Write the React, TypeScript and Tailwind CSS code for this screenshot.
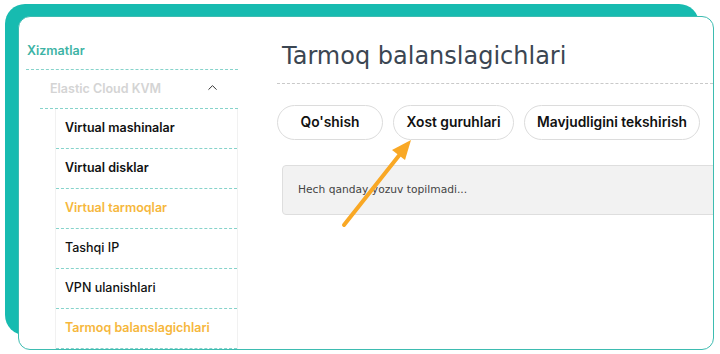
import { ChevronUp } from "lucide-react";

const SUB_ITEMS = [
  { label: "Virtual mashinalar", active: false },
  { label: "Virtual disklar", active: false },
  { label: "Virtual tarmoqlar", active: true },
  { label: "Tashqi IP", active: false, light: true },
  { label: "VPN ulanishlari", active: false, light: true },
  { label: "Tarmoq balanslagichlari", active: true },
];

const BUTTONS = [
  { label: "Qo'shish", w: "w-[106px]" },
  { label: "Xost guruhlari", w: "w-[121px]" },
  { label: "Mavjudligini tekshirish", w: "w-[176px]" },
];

export default function App() {
  return (
    <div className="relative w-[720px] h-[354px] bg-white overflow-hidden">
      {/* teal backdrop behind the card */}
      <div className="absolute left-[5px] top-[4px] w-[694px] h-[331px] rounded-[20px] bg-[#17bbb0]" />

      <div
        className="relative ml-[18px] mt-[16px] w-[696px] h-[334px] rounded-[12px] border border-[#3dbcb1] bg-white overflow-hidden flex"
        style={{ fontFamily: "Inter, 'Open Sans', sans-serif" }}
      >
        {/* sidebar */}
        <div className="ml-[7px] mt-[13px] w-[212px] flex-shrink-0">
          <div className="h-[40px] pt-[3px] flex items-center border-b border-dashed border-[#86d3cb]">
            <span className="pl-[1px] text-[12.5px] font-semibold text-[#3db3a5]">Xizmatlar</span>
          </div>
          <div className="ml-[14px] h-[39px] flex items-center justify-between border-b border-dashed border-[#86d3cb]">
            <span className="pl-[10px] text-[12.5px] font-semibold text-[#d4d4d4]">Elastic Cloud KVM</span>
            <ChevronUp size={15} strokeWidth={1.6} className="mr-[18px] mb-[3px] text-[#333]" />
          </div>
          <div className="ml-[29px] border-x border-[#f1f1f1]">
            {SUB_ITEMS.map((item) => (
              <div
                key={item.label}
                className="h-[40px] flex items-center border-b border-dashed border-[#86d3cb]"
              >
                <span
                  className={
                    "pl-[9px] text-[12.5px] " +
                    (item.active
                      ? "font-semibold text-[#f6b73c]"
                      : item.light
                        ? "font-medium text-[#111]"
                        : "font-semibold text-[#111]")
                  }
                >
                  {item.label}
                </span>
              </div>
            ))}
          </div>
        </div>

        {/* main */}
        <div className="ml-[39px] pt-[23px] flex-1 min-w-0">
          <div className="pl-[5px] pb-[11px] border-b border-dashed border-[#c9c9c9]">
            <h1
              className="text-[24px] leading-[32px] text-[#3b4652]"
              style={{ fontFamily: "'DejaVu Sans', Verdana, sans-serif" }}
            >
              Tarmoq balanslagichlari
            </h1>
          </div>

          <div className="mt-[21px] flex gap-[10px]">
            {BUTTONS.map((b) => (
              <button
                key={b.label}
                className={
                  b.w +
                  " h-[35px] flex-shrink-0 rounded-full border border-[#dcdcdc] bg-white text-[13.8px] font-semibold text-[#111]"
                }
              >
                {b.label}
              </button>
            ))}
          </div>

          <div className="mt-[25px] ml-[5px] w-[460px] h-[50px] flex items-center rounded-[4px] border border-[#dedede] bg-[#f2f2f2]">
            <span
              className="pl-[15px] text-[10.7px] text-[#444]"
              style={{ fontFamily: "'DejaVu Sans', Verdana, sans-serif" }}
            >
              Hech qanday yozuv topilmadi...
            </span>
          </div>
        </div>
      </div>

      {/* annotation arrow */}
      <svg className="absolute left-0 top-0 pointer-events-none" width="720" height="354">
        <line x1="344" y1="225" x2="401" y2="153" stroke="#f9a825" strokeWidth="4" strokeLinecap="round" />
        <polygon points="411,140 392,150 405,160" fill="#f9a825" />
      </svg>
    </div>
  );
}
